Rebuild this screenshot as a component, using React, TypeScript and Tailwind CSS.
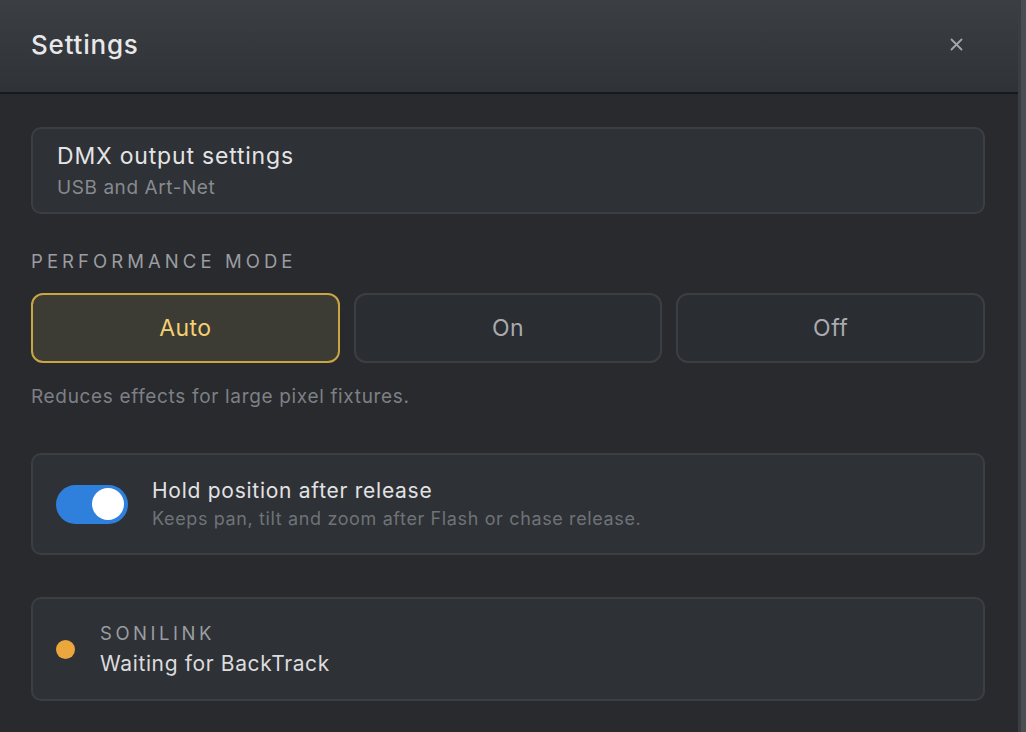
import React from "react";

export default function App() {
  return (
    <div className="flex h-[732px] w-[1026px] overflow-hidden bg-[#282a2e]" style={{ fontFamily: "Inter, 'Noto Sans', sans-serif" }}>
      <div className="flex w-[1018px] flex-col">
        <div className="flex h-[94px] shrink-0 items-center justify-between border-b-2 border-[#18191c] bg-gradient-to-b from-[#3b3e43] to-[#2f3236] pb-[4px] pl-[31px] pr-[55px]">
          <h1 className="text-[26px] font-medium tracking-[0.03em] text-[#e8e8ea]">Settings</h1>
          <svg width="13" height="13" viewBox="0 0 13 13" className="text-[#a4a6aa]">
            <path d="M1.5 1.5 L11.5 11.5 M11.5 1.5 L1.5 11.5" stroke="currentColor" strokeWidth="1.8" strokeLinecap="round" />
          </svg>
        </div>
        <div className="flex flex-col pl-[31px] pr-[33px] pt-[33px]">
          <div className="flex h-[87px] flex-col justify-center rounded-[10px] border-2 border-[#3b3e43] bg-[#2e3135] px-[24px]">
            <div className="text-[23px] leading-[28px] tracking-[0.035em] text-[#e4e4e6]">DMX output settings</div>
            <div className="mt-[7px] text-[19px] leading-[22px] tracking-[0.03em] text-[#878a8f]">USB and Art-Net</div>
          </div>
          <div className="mt-[35px] text-[18.5px] leading-[24px] tracking-[0.22em] text-[#9b9da1]">PERFORMANCE MODE</div>
          <div className="mt-[20px] grid grid-cols-3 gap-[14px]">
            <div className="flex h-[70px] items-center justify-center rounded-[12px] border-2 border-[#c9a544] bg-[#3d3c34] text-[23px] tracking-[0.02em] text-[#f3d072]">Auto</div>
            <div className="flex h-[70px] items-center justify-center rounded-[12px] border-2 border-[#3b3e43] bg-[#2a2d31] text-[23px] tracking-[0.02em] text-[#a9abaf]">On</div>
            <div className="flex h-[70px] items-center justify-center rounded-[12px] border-2 border-[#3b3e43] bg-[#2a2d31] text-[23px] tracking-[0.02em] text-[#a9abaf]">Off</div>
          </div>
          <div className="mt-[22px] text-[19px] leading-[24px] tracking-[0.035em] text-[#7d8085]">Reduces effects for large pixel fixtures.</div>
          <div className="mt-[44px] flex h-[102px] items-center gap-[24px] rounded-[10px] border-2 border-[#3b3e43] bg-[#2e3135] px-[23px]">
            <div className="flex h-[39px] w-[72px] shrink-0 items-center justify-end rounded-full bg-[#2f80dd] px-[4px]">
              <div className="h-[32px] w-[32px] rounded-full bg-white" />
            </div>
            <div className="flex flex-col">
              <div className="text-[21px] leading-[28px] tracking-[0.035em] text-[#e2e2e4]">Hold position after release</div>
              <div className="mt-[2px] text-[18px] leading-[24px] tracking-[0.035em] text-[#6f7378]">Keeps pan, tilt and zoom after Flash or chase release.</div>
            </div>
          </div>
          <div className="mt-[42px] flex h-[104px] items-center gap-[25px] rounded-[10px] border-2 border-[#3b3e43] bg-[#2e3135] px-[23px]">
            <div className="h-[19px] w-[19px] shrink-0 rounded-full bg-[#eba63c]" />
            <div className="flex flex-col">
              <div className="text-[18.5px] leading-[24px] tracking-[0.19em] text-[#9b9da1]">SONILINK</div>
              <div className="mt-[5px] text-[21px] leading-[28px] tracking-[0.03em] text-[#dcdcde]">Waiting for BackTrack</div>
            </div>
          </div>
        </div>
      </div>
      <div className="w-[8px] border-l-[3px] border-[#3a3d42] bg-[#4a4d52]" />
    </div>
  );
}
